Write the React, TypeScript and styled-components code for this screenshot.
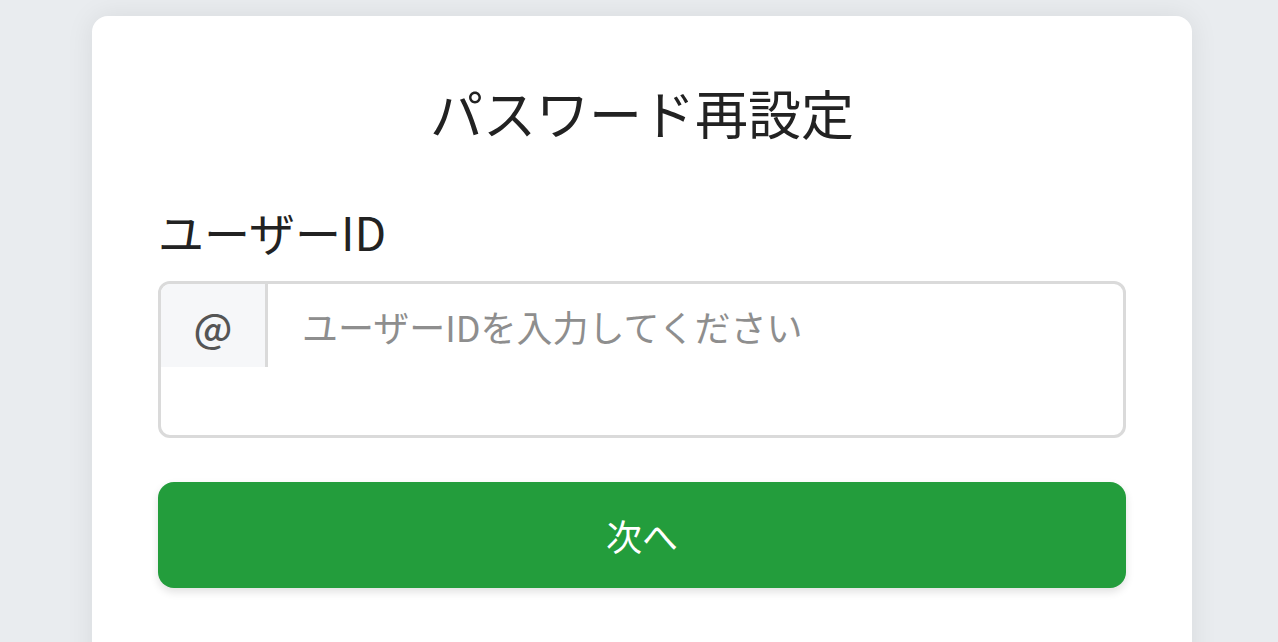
import React from "react";
import styled, { createGlobalStyle } from "styled-components";

const Global = createGlobalStyle`
  html, body { margin: 0; padding: 0; }
  body {
    background: #e9ecef;
    font-family: "Noto Sans CJK JP", "Noto Sans", sans-serif;
    color: #222;
    overflow: hidden;
  }
`;

const Page = styled.div`
  display: flex;
  justify-content: center;
  padding: 16px 0 0 6px;
  height: 642px;
  box-sizing: border-box;
  overflow: hidden;
`;

const Card = styled.div`
  width: 1100px;
  height: 700px;
  flex-shrink: 0;
  background: #fff;
  border-radius: 16px;
  box-shadow: 0 0 28px rgba(0, 0, 0, 0.08);
  padding: 58px 66px 0;
  box-sizing: border-box;
`;

const Title = styled.h1`
  margin: 0;
  text-align: center;
  font-size: 53px;
  font-weight: 400;
  line-height: 76px;
  color: #222;
`;

const Label = styled.label`
  display: block;
  margin-top: 48px;
  font-size: 46px;
  line-height: 66px;
  color: #222;
`;

const InputGroup = styled.div`
  margin-top: 17px;
  display: flex;
  align-items: flex-start;
  border: 3px solid #dadada;
  border-radius: 12px;
  height: 157px;
  box-sizing: border-box;
  overflow: hidden;
`;

const Addon = styled.span`
  display: flex;
  align-items: center;
  justify-content: center;
  width: 104px;
  height: 83px;
  background: #f6f7f9;
  border-right: 3px solid #dadada;
  font-size: 40px;
  font-weight: 500;
  color: #555;
  flex-shrink: 0;
`;

const Input = styled.input`
  flex: 1;
  height: 83px;
  border: none;
  outline: none;
  padding: 0 34px;
  font-family: inherit;
  font-size: 36px;
  color: #222;
  background: transparent;
  &::placeholder {
    color: #8e8e8e;
  }
`;

const Button = styled.button`
  display: block;
  width: 100%;
  margin-top: 44px;
  height: 106px;
  border: none;
  border-radius: 16px;
  background: #239d3c;
  color: #fff;
  font-family: inherit;
  font-size: 36px;
  box-shadow: 0 4px 8px rgba(0, 0, 0, 0.12);
  cursor: pointer;
`;

export default function App() {
  return (
    <>
      <Global />
      <Page>
        <Card>
          <Title>パスワード再設定</Title>
          <Label htmlFor="uid">ユーザーID</Label>
          <InputGroup>
            <Addon>@</Addon>
            <Input id="uid" placeholder="ユーザーIDを入力してください" />
          </InputGroup>
          <Button>次へ</Button>
        </Card>
      </Page>
    </>
  );
}
